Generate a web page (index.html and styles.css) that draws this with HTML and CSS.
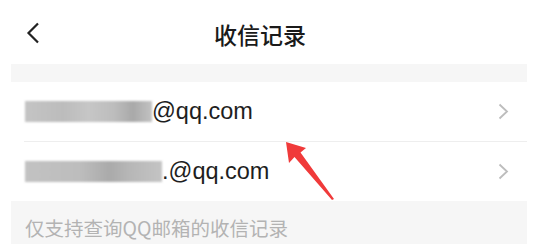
FILE: index.html
```html
<!DOCTYPE html>
<html lang="zh-CN">
<head>
  <meta charset="UTF-8" />
  <meta name="viewport" content="width=device-width, initial-scale=1.0"/>
  <title>收信记录</title>
  <link rel="stylesheet" href="styles.css">
</head>
<body>
  <div class="page">
    <div class="nav-bar">
      <svg class="back" width="14" height="22" viewBox="0 0 14 22">
        <polyline points="12,1.5 2.5,11 12,20.5" fill="none" stroke="#222" stroke-width="2.2"/>
      </svg>
      <h1>收信记录</h1>
    </div>
    <div class="gap"></div>

    <div class="mail-list">
      <div class="mail-row">
        <span class="mask mask-a"></span><span class="addr">@qq.com</span>
        <svg class="chev" width="11" height="17" viewBox="0 0 11 17">
          <polyline points="1.5,1.5 9,8.5 1.5,15.5" fill="none" stroke="#bdbdbd" stroke-width="1.8"/>
        </svg>
      </div>
      <div class="mail-row">
        <span class="mask mask-b"></span><span class="addr">.@qq.com</span>
        <svg class="chev" width="11" height="17" viewBox="0 0 11 17">
          <polyline points="1.5,1.5 9,8.5 1.5,15.5" fill="none" stroke="#bdbdbd" stroke-width="1.8"/>
        </svg>
      </div>
    </div>

    <div class="tip">仅支持查询QQ邮箱的收信记录</div>
  </div>

  <!-- annotation arrow drawn over the list -->
  <svg class="pointer" width="60" height="70" viewBox="0 0 60 70">
    <polygon points="6,7 26,13 20.5,17.5 54,64 52,65 14.5,22 9,28" fill="#f03a3a"/>
  </svg>
</body>
</html>
```

FILE: styles.css
```css
body {
  margin: 0;
  background: #fff;
  font-family: "Liberation Sans", "Noto Sans CJK SC", sans-serif;
  color: #222;
}
.page {
  margin: 0 10px 0 11px;
}
.nav-bar {
  height: 64px;
  display: flex;
  align-items: center;
  justify-content: center;
  position: relative;
  padding-right: 18px;
}
.nav-bar h1 {
  margin: 0;
  font-size: 23px;
  font-weight: 500;
  color: #1a1a1a;
  font-family: "Noto Sans CJK SC", sans-serif;
  padding-top: 4px;
}
.back {
  position: absolute;
  left: 15px;
  top: 22px;
}
.gap {
  height: 18px;
  background: #f6f6f6;
}
.mail-row {
  height: 59px;
  display: flex;
  align-items: center;
  padding-left: 14px;
  padding-right: 18px;
}
.mail-row + .mail-row {
  border-top: 1px solid #eeeeee;
  margin-left: 13px;
  padding-left: 1px;
  height: 58px;
}
.mask {
  display: inline-block;
  height: 21px;
  filter: blur(1px);
}
.mask-a {
  width: 127px;
  background: linear-gradient(90deg, #c4c4c4 0, #bcbcbc 30%, #c6c6c6 50%, #bdbdbd 70%, #a9a9a9 85%, #c2c2c2 100%);
}
.mask-b {
  width: 137px;
  background: linear-gradient(90deg, #c2c2c2 0, #bdbdbd 40%, #aaaaaa 62%, #b6b6b6 75%, #c4c4c4 100%);
}
.addr {
  font-size: 23.5px;
  color: #1e1e1e;
  flex: 1;
}
.chev {
  flex: none;
}
.tip {
  margin-top: 1px;
  background: #f6f6f6;
  height: 44px;
  padding: 12px 0 0 14px;
  box-sizing: border-box;
  font-size: 19.5px;
  color: #b3b3b3;
  font-family: "Noto Sans CJK SC", sans-serif;
}
.pointer {
  position: absolute;
  left: 280px;
  top: 135px;
}
```
